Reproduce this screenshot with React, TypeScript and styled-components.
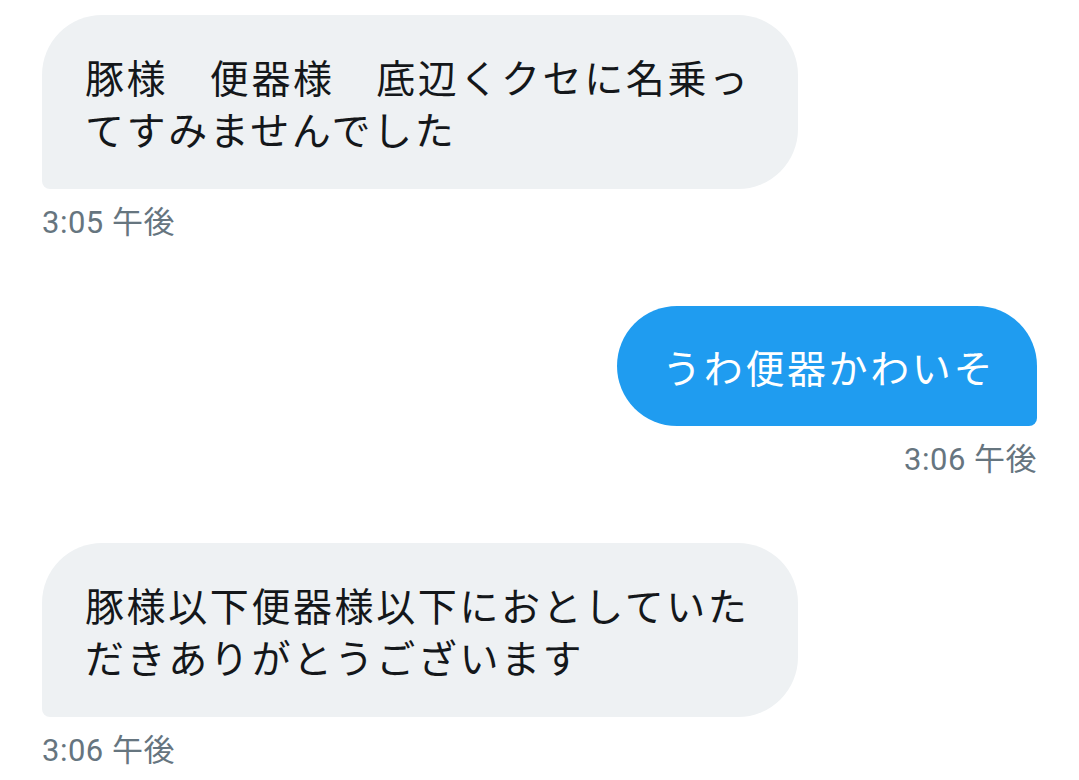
import React from "react";
import styled, { createGlobalStyle, css } from "styled-components";

const Global = createGlobalStyle`
  html, body { margin: 0; padding: 0; background: #ffffff; }
  body { font-family: "Noto Sans CJK JP", "Noto Sans", sans-serif; }
`;

const Thread = styled.div`
  display: flex;
  flex-direction: column;
  padding: 15px 42px 0 42px;
  gap: 66px;
`;

const Message = styled.div<{ $sent?: boolean }>`
  display: flex;
  flex-direction: column;
  align-items: ${(p) => (p.$sent ? "flex-end" : "flex-start")};
`;

const Bubble = styled.div<{ $sent?: boolean }>`
  box-sizing: border-box;
  font-family: "Noto Sans CJK JP", "Noto Sans", sans-serif;
  font-size: 39px;
  letter-spacing: 2.6px;
  line-height: 52px;
  padding: 35px 40px 35px 43px;
  white-space: nowrap;
  ${(p) =>
    p.$sent
      ? css`
          background: #1f9cf0;
          color: #ffffff;
          border-radius: 60px 60px 8px 60px;
          padding: 34px 42px 34px 45px;
        `
      : css`
          background: #eef1f3;
          color: #14171a;
          border-radius: 60px 60px 60px 8px;
          width: 756px;
        `}
`;

const Time = styled.div`
  margin-top: 17px;
  font-family: "Roboto", "Noto Sans CJK JP", sans-serif;
  font-size: 31px;
  letter-spacing: 0.5px;
  line-height: 34px;
  color: #66757f;
`;

export default function App() {
  return (
    <>
      <Global />
      <Thread>
        <Message>
          <Bubble>
            豚様　便器様　底辺くクセに名乗っ
            <br />
            てすみませんでした
          </Bubble>
          <Time>3:05 午後</Time>
        </Message>
        <Message $sent>
          <Bubble $sent>うわ便器かわいそ</Bubble>
          <Time>3:06 午後</Time>
        </Message>
        <Message>
          <Bubble>
            豚様以下便器様以下におとしていた
            <br />
            だきありがとうございます
          </Bubble>
          <Time>3:06 午後</Time>
        </Message>
      </Thread>
    </>
  );
}
